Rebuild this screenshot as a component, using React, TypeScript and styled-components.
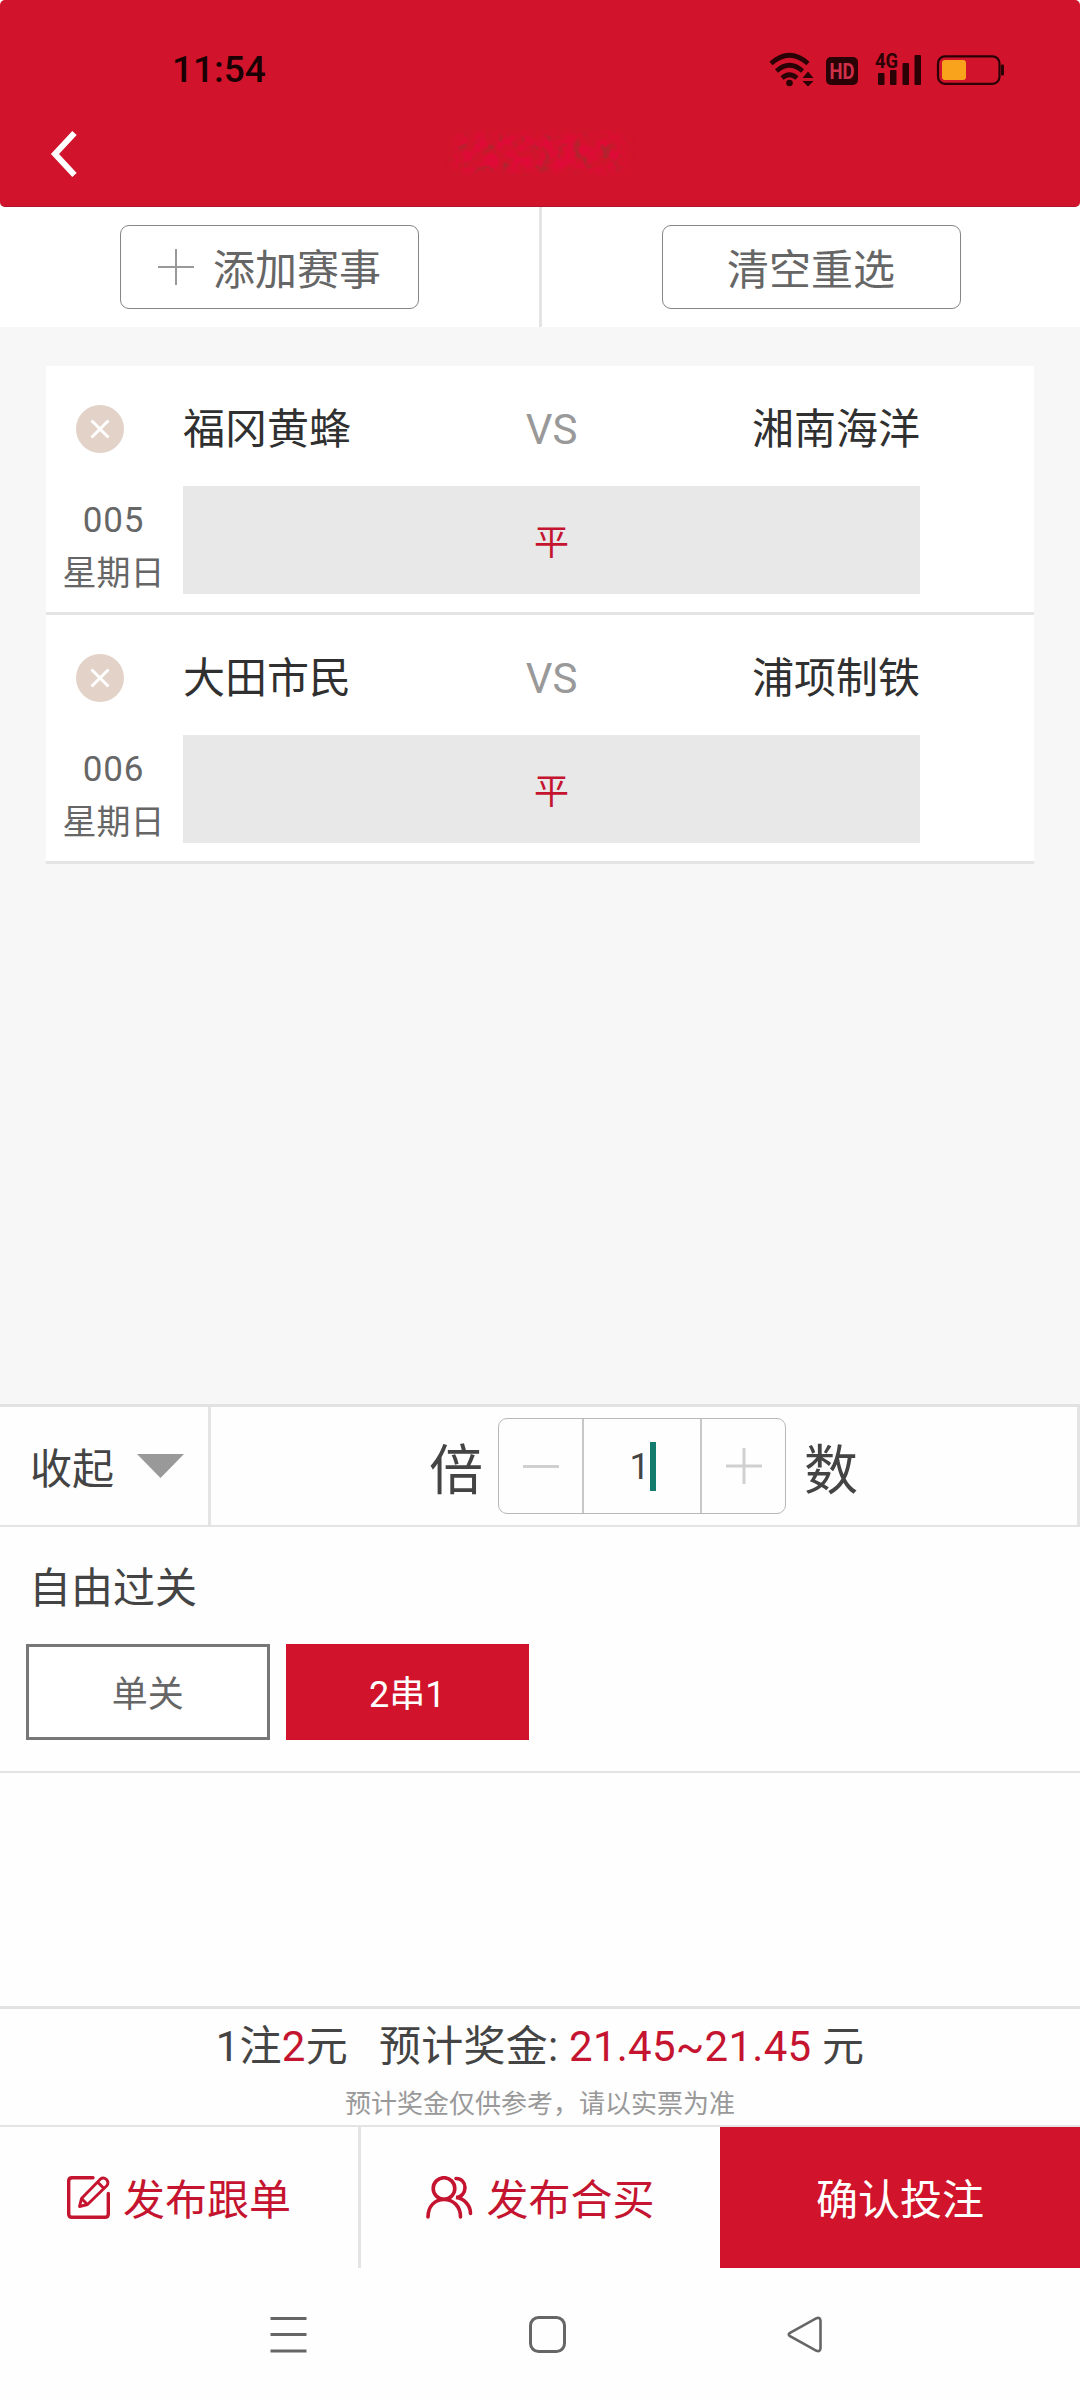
import React from 'react';
import styled, { createGlobalStyle } from 'styled-components';

const RED = '#d1142b';
const TEXT_RED = '#c5142f';
const LINE = '#e4e4e4';

const GlobalStyle = createGlobalStyle`
  * { box-sizing: border-box; }
  body { margin: 0; background: #fff; }
  button { font: inherit; background: none; border: 0; padding: 0; margin: 0; }
`;

const Screen = styled.div`
  width: 1080px;
  height: 2400px;
  display: flex;
  flex-direction: column;
  overflow: hidden;
  background: #fefefe;
  color: #444;
  font-family: Roboto, 'Noto Sans CJK SC', sans-serif;
  font-weight: 400;
  font-size: 42px;
  line-height: 1;
`;

const Header = styled.header`
  height: 207px;
  flex: none;
  background: ${RED};
  border-radius: 5px;
  border-bottom: 1px solid #b3142b;
`;

const StatusBar = styled.div`
  height: 116px;
  padding: 22px 74px 0 172px;
  display: flex;
  align-items: center;
  justify-content: space-between;
`;

const Clock = styled.span`
  font-size: 37px;
  font-weight: 500;
  color: #1a0003;
`;

const TitleBar = styled.div`
  height: 76px;
  padding: 0 50px;
  display: grid;
  grid-template-columns: 200px 1fr 200px;
  align-items: center;
  justify-items: start;
`;

const TitleMark = styled.svg`
  justify-self: center;
`;

const Actions = styled.div`
  height: 120px;
  flex: none;
  display: flex;
  background: #fff;
`;

const ActionCell = styled.div<{ $divider?: boolean }>`
  flex: ${(p) => (p.$divider ? '0 0 542px' : '1')};
  display: flex;
  align-items: center;
  justify-content: center;
  border-right: ${(p) => (p.$divider ? `3px solid ${LINE}` : '0')};
`;

const OutlineButton = styled.button`
  width: 299px;
  height: 84px;
  display: flex;
  align-items: center;
  justify-content: center;
  gap: 19px;
  border: 1px solid #868686;
  border-radius: 9px;
  color: #666;
`;

const ButtonLabel = styled.span`
  padding-top: 7px;
`;

const MatchList = styled.main`
  height: 1077px;
  flex: none;
  padding: 39px 46px 0;
  background: #f7f7f7;
`;

const Match = styled.section`
  height: 249px;
  display: grid;
  grid-template-columns: 137px 737px;
  grid-template-rows: 120px 108px;
  background: #fff;
  border-bottom: 3px solid ${LINE};
`;

const RemoveButton = styled.button`
  width: 48px;
  height: 48px;
  margin: 39px 0 0 30px;
  display: flex;
  align-items: center;
  justify-content: center;
  border-radius: 50%;
  background: #e2d2c8;
`;

const Teams = styled.div`
  display: grid;
  grid-template-columns: 1fr auto 1fr;
  align-items: center;
  padding-top: 8px;
  color: #303030;
`;

const Away = styled.span`
  text-align: right;
`;

const Versus = styled.span`
  color: #999;
`;

const MatchInfo = styled.div`
  display: flex;
  flex-direction: column;
  align-items: center;
  padding: 17px 2px 0 0;
  font-size: 34px;
  color: #666;
`;

const MatchNumber = styled.span`
  height: 53px;
  font-size: 35px;
  line-height: 36px;
  letter-spacing: 0.8px;
`;

const Pick = styled.div`
  display: flex;
  align-items: center;
  justify-content: center;
  padding-top: 7px;
  background: #e8e8e8;
  color: ${TEXT_RED};
  font-size: 35px;
`;

const Controls = styled.div`
  height: 123px;
  flex: none;
  display: flex;
  border-top: 3px solid #e2e2e2;
  border-bottom: 2px solid ${LINE};
`;

const Collapse = styled.button`
  width: 211px;
  padding: 0 24px 0 30px;
  display: flex;
  align-items: center;
  justify-content: space-between;
  border-right: 3px solid ${LINE};
  color: #444;
`;

const Multiplier = styled.div`
  flex: 1;
  display: flex;
  align-items: center;
  padding-left: 218px;
  border-right: 3px solid ${LINE};
`;

const MultiplierLabel = styled.span`
  padding-top: 11px;
  font-size: 54px;
`;

const Stepper = styled.div`
  width: 288px;
  height: 96px;
  margin: 0 18px 0 15px;
  display: grid;
  grid-template-columns: 83px 1fr 83px;
  border: 1px solid #b8b8b8;
  border-radius: 9px;
`;

const StepButton = styled.button`
  display: flex;
  align-items: center;
  justify-content: center;
`;

const StepValue = styled.div`
  display: flex;
  align-items: center;
  justify-content: center;
  padding: 2px 0 0 1px;
  border: solid #c8c8c8;
  border-width: 0 2px;
  font-size: 36px;
`;

const Caret = styled.span`
  width: 6px;
  height: 49px;
  margin-bottom: 2px;
  background: #147c6c;
`;

const PassPanel = styled.section`
  height: 246px;
  flex: none;
  padding: 41px 26px 0;
  border-bottom: 2px solid ${LINE};
`;

const PassTitle = styled.div`
  height: 76px;
  padding-left: 3px;
`;

const Options = styled.div`
  display: flex;
  gap: 16px;
`;

const Option = styled.button<{ $active?: boolean }>`
  width: 243.5px;
  height: 96px;
  padding-top: 6px;
  border: ${(p) => (p.$active ? '0' : '3px solid #777')};
  background: ${(p) => (p.$active ? RED : '#fff')};
  color: ${(p) => (p.$active ? '#fff' : '#666')};
  font-size: 36px;
`;

const Summary = styled.section`
  height: 121px;
  flex: none;
  margin-top: 233px;
  padding-top: 17px;
  display: flex;
  flex-direction: column;
  align-items: center;
  gap: 23px;
  border-top: 3px solid #e2e2e2;
  border-bottom: 2px solid ${LINE};
`;

const Totals = styled.div`
  display: flex;
  white-space: pre;
  letter-spacing: 0.25px;
`;

const Prize = styled.span`
  margin-left: 31px;
`;

const Amount = styled.span`
  color: ${TEXT_RED};
`;

const Note = styled.div`
  font-size: 26px;
  color: #999;
`;

const Footer = styled.footer`
  height: 141px;
  flex: none;
  display: grid;
  grid-template-columns: 361px 359px 360px;
`;

const FooterButton = styled.button<{ $primary?: boolean; $divider?: boolean }>`
  display: flex;
  align-items: center;
  justify-content: center;
  gap: 13px;
  background: ${(p) => (p.$primary ? RED : 'transparent')};
  color: ${(p) => (p.$primary ? '#fff' : TEXT_RED)};
  border-right: ${(p) => (p.$divider ? `3px solid ${LINE}` : '0')};
`;

const SystemNav = styled.nav`
  flex: 1;
  padding: 0 257px 0 270px;
  display: flex;
  align-items: center;
  justify-content: space-between;
`;

const StatusIcons = () => (
  <svg width="240" height="40" viewBox="766 48 240 40" fill="none">
    <g stroke="#2a0206" strokeWidth="4.6">
      <path d="M771 62.500Q789.500 46 808 62.500" />
      <path d="M776.500 70Q789.500 58.500 802.500 70" />
      <path d="M782 77Q789.500 70.500 797 77" />
    </g>
    <g fill="#2a0206">
      <circle cx="789.500" cy="82" r="3.300" />
      <path d="M808 70.500l5.500 6.500h-11zM808 85.500l5.500-5.500h-11z" />
      <rect x="826" y="56" width="32" height="28" rx="5" />
      <rect x="878" y="72" width="6.500" height="12" rx="1" />
      <rect x="890" y="69" width="6.500" height="15" rx="1" />
      <rect x="902.500" y="62" width="6.500" height="22" rx="1" />
      <rect x="914.500" y="54" width="6.500" height="30" rx="1" />
      <rect x="1001" y="63.500" width="3" height="11" rx="1" />
    </g>
    <text x="842" y="78" textAnchor="middle" fontFamily="Roboto, sans-serif" fontWeight="700" fontSize="22.500" textLength="25" lengthAdjust="spacingAndGlyphs" fill="#cf3049">HD</text>
    <text x="875" y="67" fontFamily="Roboto, sans-serif" fontWeight="700" fontSize="20" textLength="23" lengthAdjust="spacingAndGlyphs" fill="#2a0206">4G</text>
    <rect x="938" y="55.300" width="61.500" height="27.500" rx="7" stroke="#2a0206" strokeWidth="2.200" />
    <rect x="942" y="59" width="24" height="20" rx="3" fill="#f9a21b" />
  </svg>
);

const EraseMark = () => (
  <TitleMark width="196" height="60" viewBox="0 0 196 60">
    <defs>
      <filter id="bright" x="0" y="0" width="100%" height="100%" colorInterpolationFilters="sRGB">
        <feTurbulence type="fractalNoise" baseFrequency="0.09" numOctaves="3" seed="4" />
        <feColorMatrix values="0 0 0 0 0.88  0 0 0 0 0.04  0 0 0 0 0.22  3 0 0 0 -1" />
      </filter>
      <filter id="dark" x="0" y="0" width="100%" height="100%" colorInterpolationFilters="sRGB">
        <feTurbulence type="fractalNoise" baseFrequency="0.1" numOctaves="3" seed="21" />
        <feColorMatrix values="0 0 0 0 0.68  0 0 0 0 0.15  0 0 0 0 0.18  0 4 0 0 -2.200" />
      </filter>
      <filter id="feather">
        <feGaussianBlur stdDeviation="4" />
      </filter>
      <mask id="fade">
        <rect x="12" y="10" width="172" height="38" rx="8" fill="#fff" filter="url(#feather)" />
      </mask>
    </defs>
    <g mask="url(#fade)">
      <rect width="196" height="60" filter="url(#bright)" />
      <rect width="196" height="60" filter="url(#dark)" />
    </g>
  </TitleMark>
);

const BackIcon = () => (
  <svg width="30" height="48" viewBox="0 0 30 48" fill="none" stroke="#fff" strokeWidth="6">
    <path d="M24.500 3L5 24l19.500 21" />
  </svg>
);

const PlusIcon = ({ color, weight }: { color: string; weight: number }) => (
  <svg width="36" height="36" viewBox="0 0 36 36" stroke={color} strokeWidth={weight}>
    <path d="M0 18H36M18 0V36" />
  </svg>
);

const MinusIcon = () => (
  <svg width="36" height="36" viewBox="0 0 36 36" stroke="#d0d0d0" strokeWidth="3">
    <path d="M0 18.500H36" />
  </svg>
);

const CrossIcon = () => (
  <svg width="20" height="20" viewBox="0 0 20 20" stroke="#fff" strokeWidth="3">
    <path d="M1.500 1.500l17 17M18.500 1.500l-17 17" />
  </svg>
);

const EditIcon = () => (
  <svg width="43" height="43" viewBox="0 0 43 43" fill="none" stroke={TEXT_RED} strokeWidth="3.400" strokeLinecap="round" strokeLinejoin="round">
    <path d="M26 1.700H5Q1.700 1.700 1.700 5V38Q1.700 41.300 5 41.300H38Q41.300 41.300 41.300 38V17.500" />
    <path d="M12.500 30.500L14.500 22.500L33.500 3Q36.500 0.800 39.500 3.500Q42 6.500 40 9.500L20.500 28.500ZM15 23L20 28M30.500 6L37 12.500" strokeWidth="2.900" />
  </svg>
);

const UsersIcon = () => (
  <svg width="47" height="43" viewBox="0 0 47 43" fill="none" stroke={TEXT_RED} strokeWidth="3.600" strokeLinecap="round">
    <ellipse cx="18" cy="12.500" rx="10.800" ry="10.800" />
    <path d="M2 41C2 30 9 23.500 18 23.500S34.500 30 34.500 41" />
    <path d="M30 2.500C35.500 2.500 39 6.500 39 11.500C39 16.500 35.500 21.500 30 21.500C38 22.500 44.500 29 44.500 37.500" />
  </svg>
);

const matches = [
  { home: '福冈黄蜂', away: '湘南海洋', number: '005', day: '星期日', pick: '平' },
  { home: '大田市民', away: '浦项制铁', number: '006', day: '星期日', pick: '平' },
];

export default function App() {
  return (
    <Screen>
      <GlobalStyle />
      <Header>
        <StatusBar>
          <Clock>11:54</Clock>
          <StatusIcons />
        </StatusBar>
        <TitleBar>
          <BackIcon />
          <EraseMark />
        </TitleBar>
      </Header>
      <Actions>
        <ActionCell $divider>
          <OutlineButton>
            <PlusIcon color="#999" weight={2} />
            <ButtonLabel>添加赛事</ButtonLabel>
          </OutlineButton>
        </ActionCell>
        <ActionCell>
          <OutlineButton><ButtonLabel>清空重选</ButtonLabel></OutlineButton>
        </ActionCell>
      </Actions>
      <MatchList>
        {matches.map((m) => (
          <Match key={m.number}>
            <RemoveButton><CrossIcon /></RemoveButton>
            <Teams>
              <span>{m.home}</span>
              <Versus>VS</Versus>
              <Away>{m.away}</Away>
            </Teams>
            <MatchInfo>
              <MatchNumber>{m.number}</MatchNumber>
              <span>{m.day}</span>
            </MatchInfo>
            <Pick>{m.pick}</Pick>
          </Match>
        ))}
      </MatchList>
      <Controls>
        <Collapse>
          <ButtonLabel>收起</ButtonLabel>
          <svg width="47" height="24" viewBox="0 0 47 24"><path d="M0 0H47L23.500 24Z" fill="#999" /></svg>
        </Collapse>
        <Multiplier>
          <MultiplierLabel>倍</MultiplierLabel>
          <Stepper>
            <StepButton><MinusIcon /></StepButton>
            <StepValue>1<Caret /></StepValue>
            <StepButton><PlusIcon color="#d0d0d0" weight={3} /></StepButton>
          </Stepper>
          <MultiplierLabel>数</MultiplierLabel>
        </Multiplier>
      </Controls>
      <PassPanel>
        <PassTitle>自由过关</PassTitle>
        <Options>
          <Option>单关</Option>
          <Option $active>2串1</Option>
        </Options>
      </PassPanel>
      <Summary>
        <Totals>
          <span>1注<Amount>2</Amount>元</span>
          <Prize>预计奖金: <Amount>21.45~21.45</Amount> 元</Prize>
        </Totals>
        <Note>预计奖金仅供参考，请以实票为准</Note>
      </Summary>
      <Footer>
        <FooterButton $divider><EditIcon /><ButtonLabel>发布跟单</ButtonLabel></FooterButton>
        <FooterButton><UsersIcon /><ButtonLabel>发布合买</ButtonLabel></FooterButton>
        <FooterButton $primary><ButtonLabel>确认投注</ButtonLabel></FooterButton>
      </Footer>
      <SystemNav>
        <svg width="37" height="37" viewBox="0 0 37 37" stroke="#666" strokeWidth="3">
          <path d="M0.500 2.500H36.500M0.500 18.500H36.500M0.500 35H36.500" />
        </svg>
        <svg width="37" height="37" viewBox="0 0 37 37" fill="none" stroke="#666" strokeWidth="3">
          <rect x="1.500" y="1.500" width="34" height="34" rx="8" />
        </svg>
        <svg width="36" height="37" viewBox="0 0 36 37" fill="none" stroke="#666" strokeWidth="2.600">
          <path d="M3 16.800L29.500 2.200Q33.500 1 33.500 5V32Q33.500 36 29.500 34.800L3 20.200Q0.500 18.500 3 16.800Z" />
        </svg>
      </SystemNav>
    </Screen>
  );
}
